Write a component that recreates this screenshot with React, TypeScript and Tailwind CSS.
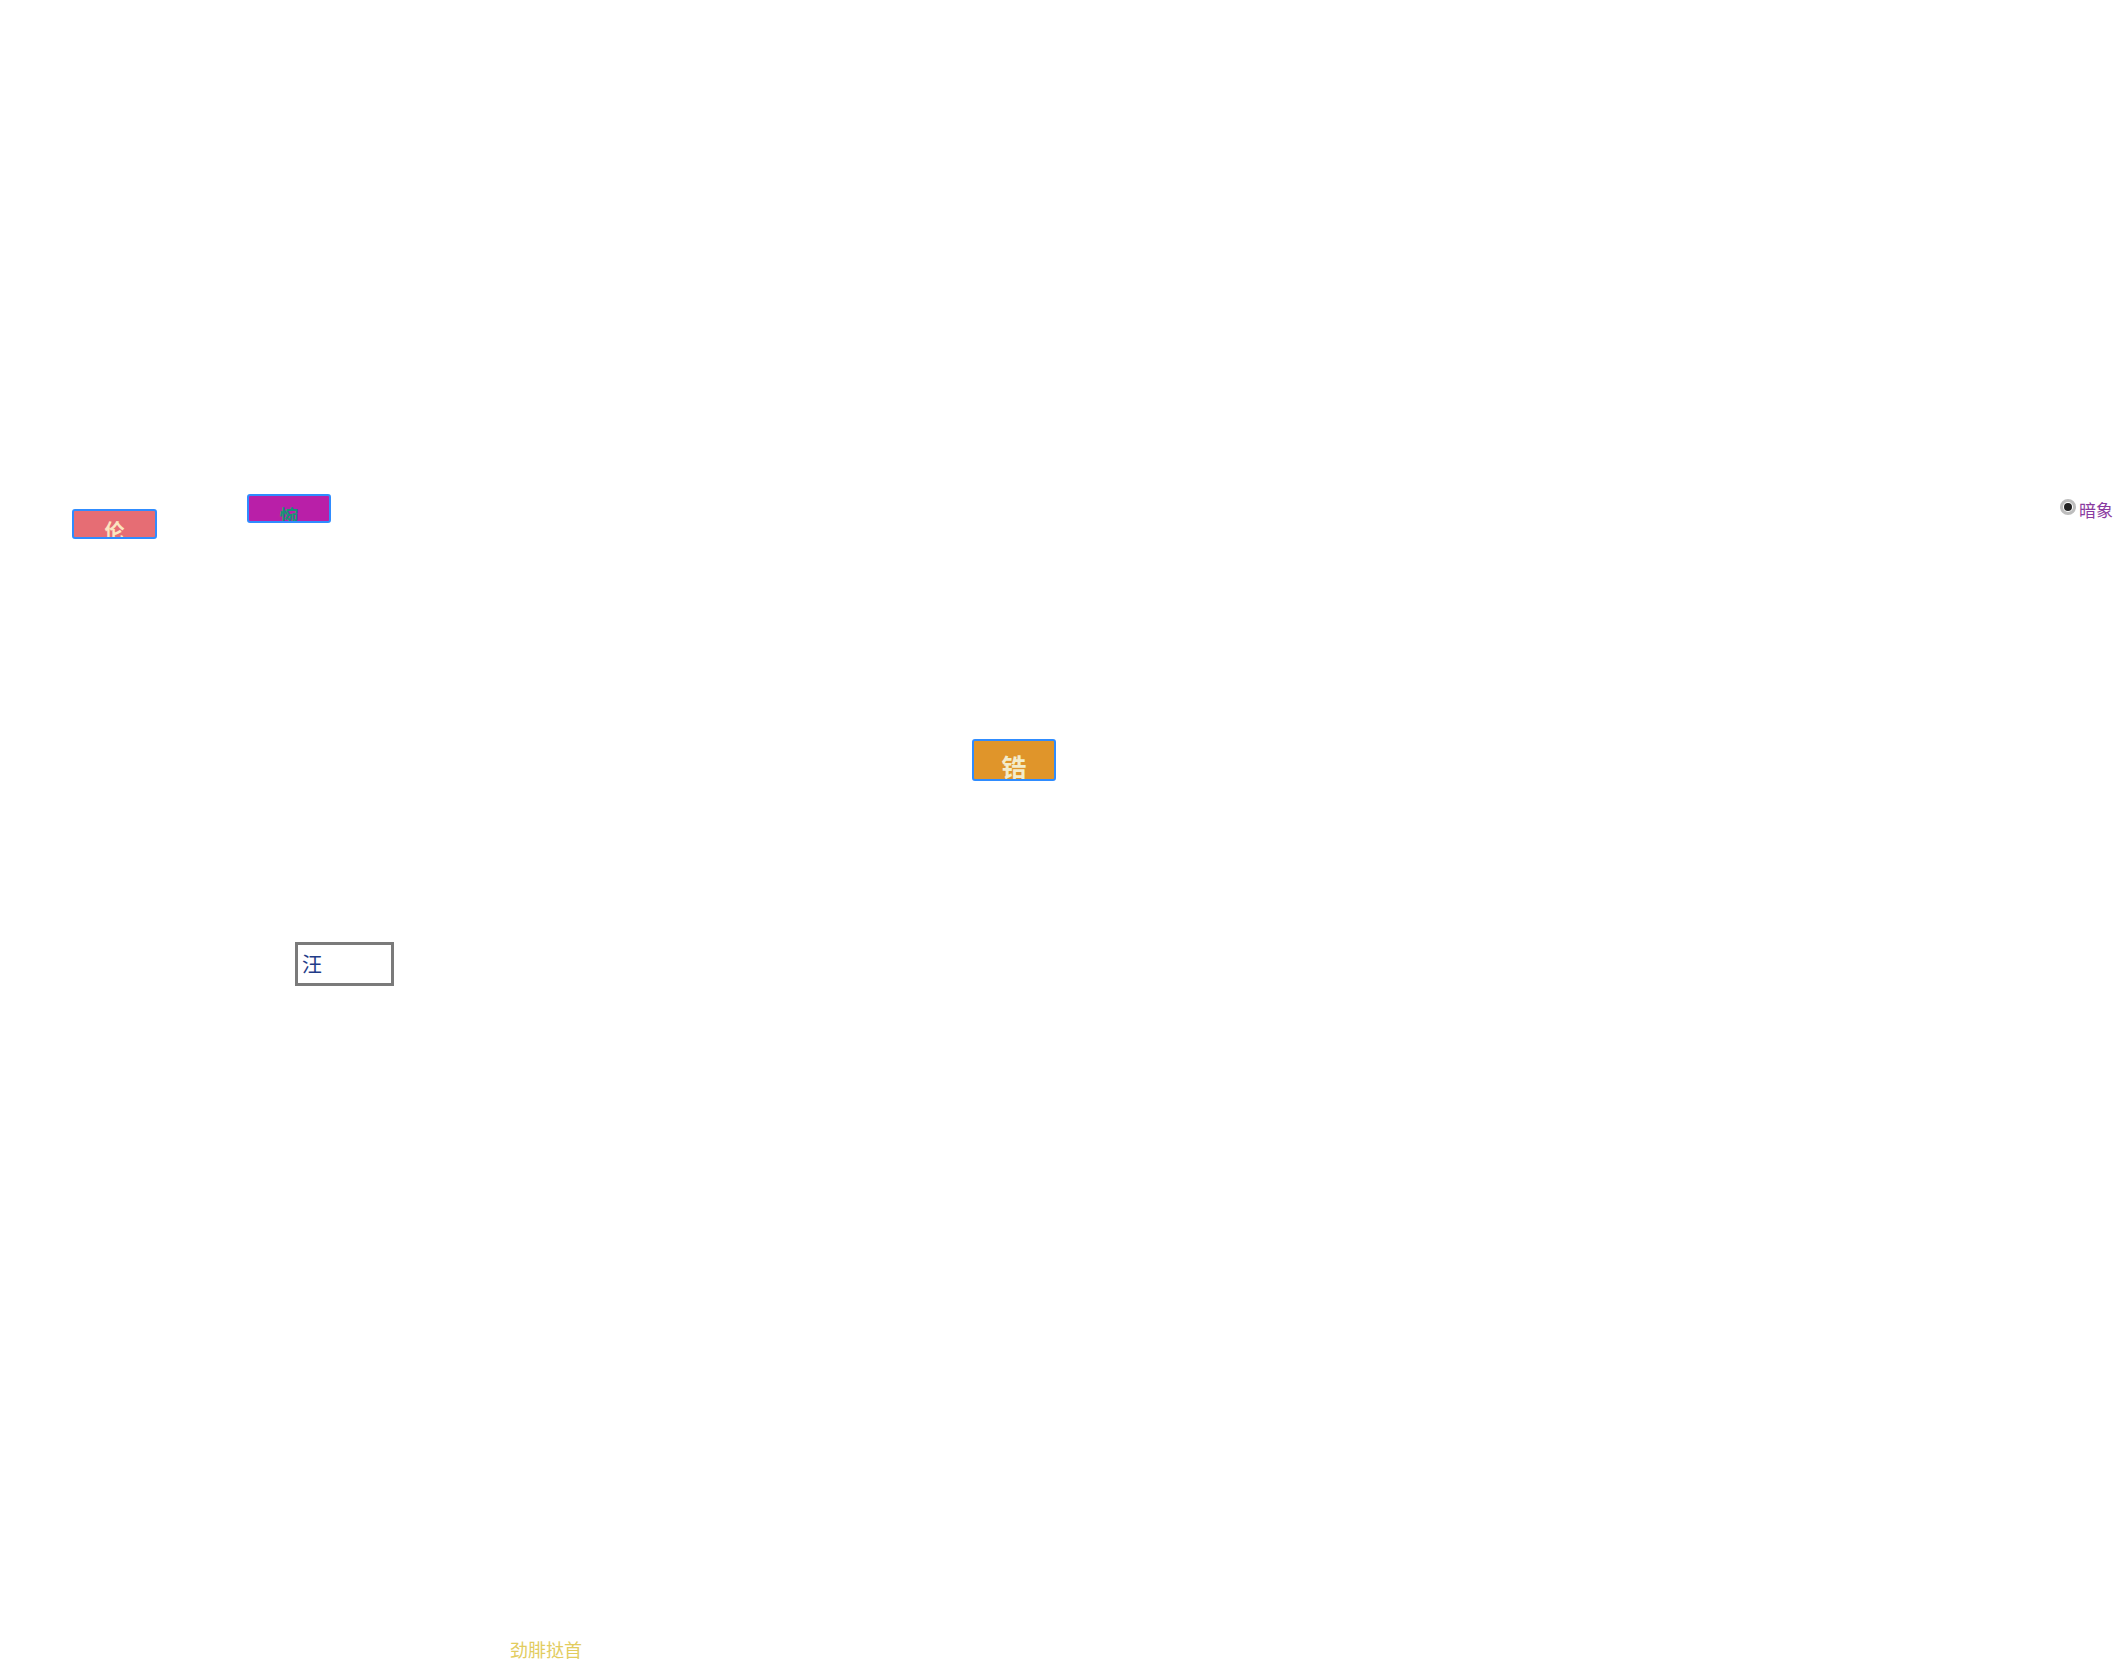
const cjk = { fontFamily: '"Noto Sans CJK SC", "Noto Sans", sans-serif' };

export default function App() {
  return (
    <main className="relative w-[2127px] h-[1677px] bg-white overflow-hidden" style={cjk}>
      <button className="absolute left-[72px] top-[509px] w-[85px] h-[30px] flex justify-center pt-[10px] overflow-hidden rounded-[3px] border-2 border-[#2f8cff] bg-[#e66d74] text-[20px] font-bold leading-none text-[#fbe6c0]">
        伦
      </button>

      <button className="absolute left-[247px] top-[494px] w-[84px] h-[29px] flex justify-center pt-[10px] overflow-hidden rounded-[3px] border-2 border-[#2f8cff] bg-[#b91fa8] text-[19px] font-bold leading-none text-[#149476]">
        惋
      </button>

      <label className="absolute left-[2060px] top-[496px] flex items-center gap-[3px]">
        <span className="w-[16px] h-[16px] rounded-full border-[3px] border-[#bdbdbd] bg-white flex items-center justify-center">
          <span className="w-[8px] h-[8px] rounded-full bg-[#222]" />
        </span>
        <span className="text-[17px] leading-none text-[#8a3aa0] mt-[5px]">暗象</span>
      </label>

      <button className="absolute left-[972px] top-[739px] w-[84px] h-[42px] flex justify-center pt-[13px] overflow-hidden rounded-[3px] border-2 border-[#2f8cff] bg-[#e0952a] text-[25px] font-bold leading-none text-[#f3eccb]">
        锆
      </button>

      <div className="absolute left-[295px] top-[942px] w-[99px] h-[44px] border-[3px] border-[#7a7a7a] bg-white flex items-center pl-[4px] text-[20px] leading-none text-[#1f3c88]">
        汪
      </div>

      <p className="absolute left-[510px] top-[1640px] text-[18px] leading-none text-[#e2cc5e]">劲腓挞首</p>
    </main>
  );
}
